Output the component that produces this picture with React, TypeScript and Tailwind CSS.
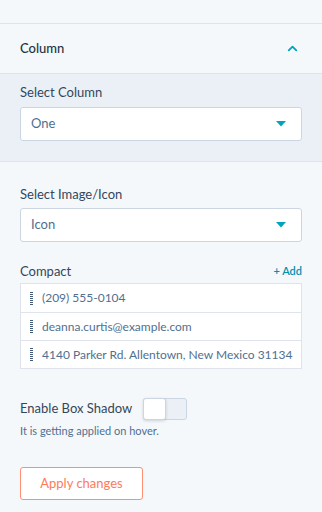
import { ChevronUp } from "lucide-react";

function Caret() {
  return (
    <svg width="10" height="6" viewBox="0 0 10 6" className="text-[#00a4bd]">
      <path d="M0 0h10L5 5.5z" fill="currentColor" />
    </svg>
  );
}

function Grip() {
  return (
    <div className="flex flex-col gap-[1px] w-[3px]">
      {Array.from({ length: 7 }).map((_, i) => (
        <span key={i} className="block w-[3px] h-[1px] bg-[#425b76]" />
      ))}
    </div>
  );
}

function SelectBox({ value }: { value: string }) {
  return (
    <div className="flex items-center justify-between h-[34px] rounded-[3px] border border-[#cbd6e2] bg-white pl-[10px] pr-[15px]">
      <span className="text-[13px] text-[#516f90]">{value}</span>
      <Caret />
    </div>
  );
}

export default function App() {
  const rows = ["(209) 555-0104", "deanna.curtis@example.com", "4140 Parker Rd. Allentown, New Mexico 31134"];

  return (
    <div className="w-[322px] h-[512px] overflow-hidden bg-[#f5f8fa] text-[#33475b]" style={{ fontFamily: "Lato, 'Noto Sans', sans-serif" }}>
      <div className="h-[24px] border-b border-[#dfe3eb]" />

      {/* Accordion header */}
      <div className="flex items-center justify-between h-[50px] border-b border-[#dfe3eb] pl-[20px] pr-[22px]">
        <span className="text-[13px] font-medium text-[#213343]">Column</span>
        <ChevronUp className="w-[15px] h-[15px] text-[#00a4bd]" strokeWidth={3} />
      </div>

      <div className="bg-[#eaf0f6] border-b border-[#dfe3eb] px-[20px] pt-[10px] pb-[20px]">
        <div className="text-[13px] leading-[16px] mb-[7px]">Select Column</div>
        <SelectBox value="One" />
      </div>

      <div className="px-[20px] pt-[24px]">
        <div className="text-[13px] leading-[16px] mb-[6px]">Select Image/Icon</div>
        <SelectBox value="Icon" />

        <div className="flex items-center justify-between mt-[21px] mb-[4px] leading-[16px]">
          <span className="text-[13px]">Compact</span>
          <span className="text-[11px] font-semibold text-[#0091ae]">+ Add</span>
        </div>

        <div className="border border-[#dfe3eb] bg-white">
          {rows.map((r, i) => (
            <div key={r} className={`flex items-center gap-[9px] h-[28px] pl-[9px] ${i > 0 ? "border-t border-[#dfe3eb]" : ""}`}>
              <Grip />
              <span className="text-[12px] text-[#516f90] whitespace-nowrap">{r}</span>
            </div>
          ))}
        </div>

        <div className="flex items-center gap-[11px] mt-[29px]">
          <span className="text-[13px]">Enable Box Shadow</span>
          <div className="flex w-[44px] h-[22px] rounded-[3px] border border-[#cbd6e2] bg-[#eaf0f6]">
            <div className="w-[23px] h-[22px] -mt-[1px] -ml-[1px] rounded-[3px] border border-[#cbd6e2] bg-white shadow-[0_1px_3px_rgba(45,62,80,0.2)]" />
          </div>
        </div>
        <div className="text-[11px] leading-[16px] text-[#516f90] mt-[3px]">It is getting applied on hover.</div>

        <button className="mt-[28px] w-[123px] h-[33px] rounded-[3px] border border-[#ff8f73] bg-white text-[13px] text-[#ff7a59]">
          Apply changes
        </button>
      </div>
    </div>
  );
}
